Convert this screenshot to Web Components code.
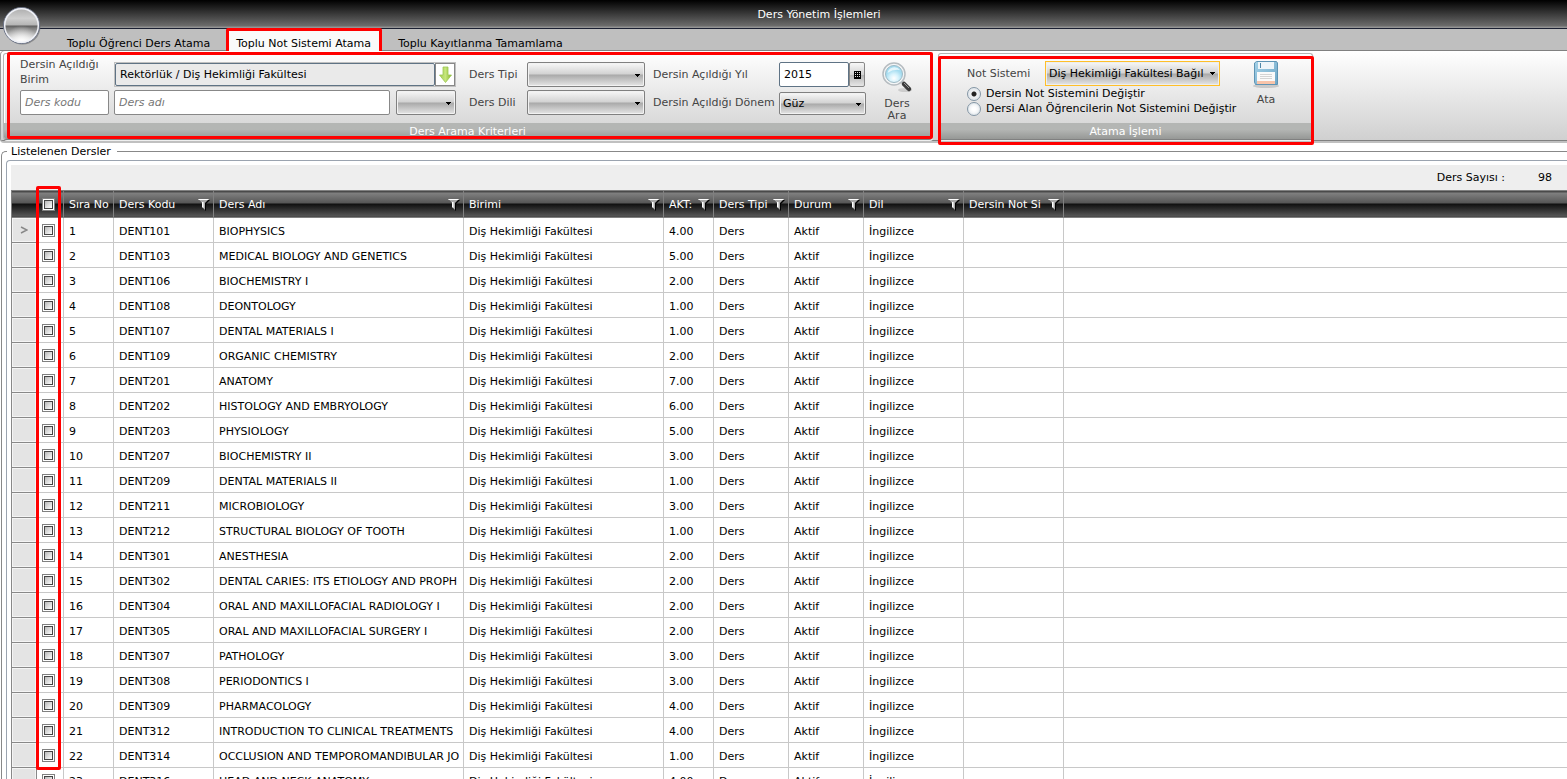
<!DOCTYPE html>
<html lang="tr">
<head>
<meta charset="utf-8">
<title>Ders Yönetim İşlemleri</title>
<style>
  html, body { margin: 0; height: 100%; }
  body { background: #fff; overflow: hidden; color: #000; font: 11px/15px "DejaVu Sans", Verdana, sans-serif; }
</style>
</head>
<body>
<course-app></course-app>
<script>
const RESET = `
  *, *::before, *::after { box-sizing: border-box; }
  button, input, select { font: inherit; color: inherit; margin: 0; }
  :host([hidden]) { display: none; }
`;

class BaseElement extends HTMLElement {
  connectedCallback() {
    if (this.shadowRoot) return;
    const root = this.attachShadow({ mode: 'open' });
    root.innerHTML = `<style>${RESET}${this.css()}</style>${this.html()}`;
  }
  css() { return ''; }
  html() { return ''; }
}

customElements.define('title-bar', class extends BaseElement {
  css() { return `
    :host { display: block; height: 29px; border-bottom: 1px solid #1b2032; color: #fff;
      background: linear-gradient(#000, #6c6c6c 26px, #8f8f8f 27px, #999); }
    h1 { margin: 0; font: inherit; line-height: 29px; text-align: center; padding-left: 71px; }
  `; }
  html() { return `<h1><slot></slot></h1>`; }
});

customElements.define('app-orb', class extends BaseElement {
  css() { return `
    :host { position: absolute; left: 3px; top: 6px; width: 38px; height: 40px; z-index: 2; }
    button { border: 0; padding: 0; background: none; display: block; }
    svg { display: block; }
  `; }
  html() { return `<button aria-label="Menü"><svg width="38" height="40" viewBox="0 0 38 40">
    <defs>
      <linearGradient id="o" x1="0" y1="0" x2="0" y2="1">
        <stop offset="0" stop-color="#aaa"/><stop offset=".3" stop-color="#cfcfcf"/><stop offset=".49" stop-color="#b4b4b4"/>
        <stop offset=".51" stop-color="#5e5e5e"/><stop offset=".58" stop-color="#808080"/><stop offset=".85" stop-color="#d8d8d8"/><stop offset="1" stop-color="#fff"/>
      </linearGradient>
      <radialGradient id="w" cx=".5" cy="1" r=".5"><stop offset="0" stop-color="#fff"/><stop offset="1" stop-color="#fff" stop-opacity="0"/></radialGradient>
    </defs>
    <circle cx="19.500" cy="20.500" r="18" fill="#666" opacity=".6"/>
    <circle cx="18.500" cy="19.500" r="18" fill="url(#o)" stroke="#6b7388" stroke-width="1"/>
    <circle cx="18.500" cy="19.500" r="16.800" fill="url(#w)" stroke="#eef0f6" stroke-width="1.500"/>
  </svg></button>`; }
});

customElements.define('ribbon-tabs', class extends BaseElement {
  css() { return `
    :host { display: block; height: 22px; background: #bfbfbf; border-bottom: 1px solid #808080; padding-left: 57px; }
    nav { display: flex; }
  `; }
  html() { return `<nav><slot></slot></nav>`; }
});

customElements.define('ribbon-tab', class extends BaseElement {
  css() { return `
    :host { display: block; position: relative; }
    a { display: block; height: 21px; line-height: 29px; padding: 0 9px 0 10px; color: #000; text-decoration: none; white-space: nowrap; }
    :host([selected]) { width: 154px; margin: 0 2px 0 8px; }
    :host([selected]) a { background: #fafafa; height: 22px; padding: 0 9px; }
    :host([selected])::after { content: ""; position: absolute; inset: -1px -1px -3px -1px; border: 3px solid #f00; border-radius: 2px; pointer-events: none; }
    :host(:last-child) a { padding-left: 15px; }
  `; }
  html() { return `<a href="#"><slot></slot></a>`; }
});

customElements.define('ribbon-group', class extends BaseElement {
  css() { return `
    :host { display: flex; flex-direction: column; position: relative; height: 87px; border: 1px solid #b4b4b4;
      border-bottom-color: #808080; border-radius: 3px; box-shadow: inset 1px 1px #fff, 1px 1px #eee; }
    .body { flex: 1; }
    .caption { height: 16px; line-height: 18px; text-align: center; color: #fff; background: linear-gradient(#b4b6b4 40%, #969896); border-radius: 0 0 2px 2px; }
    .mark { position: absolute; inset: var(--mark-inset, 0); border: 3px solid #f00; border-radius: 2px; pointer-events: none; }
  `; }
  html() { return `<div class="body"><slot></slot></div><div class="caption">${this.getAttribute('caption')}</div><div class="mark"></div>`; }
});

customElements.define('drop-down', class extends BaseElement {
  css() { return `
    :host { display: block; position: relative; height: 25px; }
    select { appearance: none; display: block; width: 100%; height: 100%; padding: 0 16px 0 3px; border: 1px solid #808080; border-radius: 2px;
      background: linear-gradient(#f8f8f8, #d2d2d2 48%, #a9a9a9 52%, #e6e6e6); box-shadow: inset 0 0 0 1px #f2f2f2; }
    :host([active]) select { border-color: #ffbf28; border-radius: 0; padding: 0 0 0 3px; box-shadow: inset 0 0 0 1px #eee; }
    svg { position: absolute; right: 5px; top: 50%; margin-top: -1px; pointer-events: none; }
  `; }
  html() { return `<select aria-label="${this.getAttribute('label')}"><option>${this.getAttribute('value') || ''}</option></select>
    <svg width="5" height="3" viewBox="0 0 5 3" shape-rendering="crispEdges"><path d="M0 0H5V1H4V2H3V3H2V2H1V1H0Z" fill="#000"/></svg>`; }
});

customElements.define('tool-button', class extends BaseElement {
  css() { return `
    :host { display: block; }
    button { display: flex; flex-direction: column; align-items: center; border: 0; padding: 0; background: none; line-height: 12px; color: #444; width: 100%; }
    ::slotted(svg) { display: block; }
  `; }
  html() { return `<button><slot></slot></button>`; }
});

customElements.define('search-criteria', class extends BaseElement {
  css() { return `
    :host { display: grid; grid-template-columns: 94px 355px 58px 126px 126px 87px 62px; grid-template-rows: 25px 25px; row-gap: 3px; padding: 8px 0 0 16px; color: #444; }
    .label { align-self: center; }
    .unit { width: 80px; align-self: end; height: 30px; }
    input { height: 25px; border: 1px solid #888; border-radius: 2px; padding: 0 4px; background: #fff; width: 100%; color: #000; outline: 0; }
    input::placeholder { color: #777; font-style: italic; opacity: 1; }
    .pick { display: flex; width: 342px; border: 1px solid #c0c0c0; }
    .pick input { height: 23px; background: #eaeaea; border-color: #5f7385; }
    .pick button { flex: none; width: 20px; padding: 0; border: 1px solid #888; background: #fff; display: grid; place-items: center; }
    .code { width: 89px; }
    .name { display: flex; gap: 6px; width: 342px; }
    .name input { flex: 1; }
    .name drop-down { width: 60px; }
    .wide { width: 118px; }
    .year { display: flex; }
    .year input { width: 70px; border-color: #5f7385; }
    .year button { width: 16px; padding: 0; border: 1px solid #888; border-radius: 2px; background: linear-gradient(#f8f8f8, #d2d2d2 50%, #b4b4b4 52%, #e6e6e6); display: grid; place-items: center; }
    .term { height: 23px; align-self: end; color: #000; }
    tool-button { grid-column: 7; grid-row: 1 / 3; }
    tool-button span { margin-top: 4px; }
    .code { grid-column: 1; }
  `; }
  html() { return `
    <label class="unit" for="unit">Dersin Açıldığı Birim</label>
    <div class="pick"><input id="unit" value="Rektörlük / Diş Hekimliği Fakültesi" readonly><button aria-label="Birim seç">
      <svg width="13" height="18" viewBox="0 0 13 18"><defs><linearGradient id="g" x1="0" x2="1"><stop offset="0" stop-color="#a4cf52"/><stop offset=".5" stop-color="#c6e67c"/><stop offset="1" stop-color="#85b52c"/></linearGradient></defs>
      <path d="M4 1H9V9H12.500L6.500 16.500L.5 9H4Z" fill="url(#g)" stroke="#9cc653" stroke-width=".8"/></svg></button></div>
    <span class="label">Ders Tipi</span><drop-down class="wide" label="Ders Tipi"></drop-down>
    <label class="label" for="year">Dersin Açıldığı Yıl</label>
    <div class="year"><input id="year" value="2015"><button aria-label="Yıl seç"><svg width="7" height="8" viewBox="0 0 7 8"><path d="M0 0H7V8H0Z" fill="#000"/><path d="M1 1h1v1H1zM3 1h1v1H3zM5 1h1v1H5zM1 3h1v1H1zM3 3h1v1H3zM5 3h1v1H5zM1 5h1v1H1zM3 5h1v1H3zM5 5h1v1H5z" fill="#ddd"/></svg></button></div>
    <tool-button>
      <svg width="32" height="32" viewBox="0 0 32 32"><defs><radialGradient id="m" cx=".5" cy=".75"><stop offset="0" stop-color="#fff"/><stop offset=".5" stop-color="#d8f3fc"/><stop offset="1" stop-color="#a4dcf0"/></radialGradient></defs>
        <ellipse cx="24" cy="28" rx="7" ry="2" fill="#888" opacity=".3"/>
        <path d="M20 19L23 22" stroke="#aaa" stroke-width="2.500"/>
        <path d="M23 22L28 27" stroke="#3c3c3c" stroke-width="4.500" stroke-linecap="round"/><path d="M23 21L28 26" stroke="#999" stroke-width="1"/>
        <circle cx="13" cy="12" r="11" fill="#f4f6f7" stroke="#b6bcc0" stroke-width="1.500"/><circle cx="13" cy="12" r="8.500" fill="url(#m)" stroke="#9fb9c4" stroke-width="1"/>
        <path d="M6.500 11A7 7 0 0 1 19 8Q12 7 6.500 11" fill="#fff" opacity=".7"/></svg>
      <span>Ders<br>Ara</span></tool-button>
    <input class="code" placeholder="Ders kodu" aria-label="Ders kodu">
    <div class="name"><input placeholder="Ders adı" aria-label="Ders adı"><drop-down label="Seçim"></drop-down></div>
    <span class="label">Ders Dili</span><drop-down class="wide" label="Ders Dili"></drop-down>
    <span class="label">Dersin Açıldığı Dönem</span><drop-down class="term" label="Dönem" value="Güz"></drop-down>`; }
});

customElements.define('assign-panel', class extends BaseElement {
  css() { return `
    :host { display: flex; padding: 6px 0 0 28px; color: #444; }
    .left { width: 284px; }
    .row { display: flex; align-items: center; height: 26px; }
    .row span { width: 78px; }
    drop-down { width: 175px; color: #000; }
    label { display: flex; align-items: center; gap: 5px; height: 15px; color: #000; white-space: nowrap; }
    input { appearance: none; flex: none; width: 14px; height: 14px; border-radius: 50%; border: 1px solid #8496a5; background: radial-gradient(#fff 20%, #dfe5ea); box-shadow: inset 0 0 0 1px #e4e9ed; }
    input:checked { background: radial-gradient(circle, #222 0 2px, #eef1f4 3px, #d5dce2); }
    tool-button { width: 30px; }
    tool-button span { margin-top: 6px; }
  `; }
  html() { return `
    <div class="left"><div class="row"><span>Not Sistemi</span><drop-down active label="Not Sistemi" value="Diş Hekimliği Fakültesi Bağıl"></drop-down></div>
    <label><input type="radio" name="m" checked>Dersin Not Sistemini Değiştir</label>
    <label><input type="radio" name="m">Dersi Alan Öğrencilerin Not Sistemini Değiştir</label></div>
    <tool-button><svg width="28" height="28" viewBox="0 0 28 28"><defs><linearGradient id="d" x1="0" y1="0" x2="1" y2="1"><stop offset="0" stop-color="#a5d2e8"/><stop offset="1" stop-color="#6ea6c6"/></linearGradient></defs>
      <ellipse cx="14" cy="26" rx="13" ry="2" fill="#888" opacity=".35"/>
      <path d="M4.500 1.500H24.500L25.500 3V24.500H3.500L2.500 22V3Z" fill="url(#d)" stroke="#5e94b4"/>
      <path d="M6 2H22V9H6Z" fill="#eef5f9"/><path d="M8 3H9V8H8Z" fill="#4f87a8"/>
      <path d="M5 12H23V24H5Z" fill="#fafafa"/><path d="M5 21H23V24H5Z" fill="#f8c4aa"/><path d="M8 14.500H20M8 16.500H20M8 18.500H20" stroke="#d4d4d4"/></svg>
      <span>Ata</span></tool-button>`; }
});

const COURSES = [
  ['DENT101', 'BIOPHYSICS', 4], ['DENT103', 'MEDICAL BIOLOGY AND GENETICS', 5], ['DENT106', 'BIOCHEMISTRY I', 2],
  ['DENT108', 'DEONTOLOGY', 1], ['DENT107', 'DENTAL MATERIALS I', 1], ['DENT109', 'ORGANIC CHEMISTRY', 2],
  ['DENT201', 'ANATOMY', 7], ['DENT202', 'HISTOLOGY AND EMBRYOLOGY', 6], ['DENT203', 'PHYSIOLOGY', 5],
  ['DENT207', 'BIOCHEMISTRY II', 3], ['DENT209', 'DENTAL MATERIALS II', 1], ['DENT211', 'MICROBIOLOGY', 3],
  ['DENT212', 'STRUCTURAL BIOLOGY OF TOOTH', 1], ['DENT301', 'ANESTHESIA', 2],
  ['DENT302', 'DENTAL CARIES: ITS ETIOLOGY AND PROPH', 2], ['DENT304', 'ORAL AND MAXILLOFACIAL RADIOLOGY I', 2],
  ['DENT305', 'ORAL AND MAXILLOFACIAL SURGERY I', 2], ['DENT307', 'PATHOLOGY', 3], ['DENT308', 'PERIODONTICS I', 3],
  ['DENT309', 'PHARMACOLOGY', 4], ['DENT312', 'INTRODUCTION TO CLINICAL TREATMENTS', 4],
  ['DENT314', 'OCCLUSION AND TEMPOROMANDIBULAR JO', 1], ['DENT316', 'HEAD AND NECK ANATOMY', 4]
];

customElements.define('course-grid', class extends BaseElement {
  css() { return `
    :host { display: block; position: relative; }
    table { table-layout: fixed; width: 100%; border-collapse: separate; border-spacing: 0; }
    th { height: 28px; padding: 0; border: 1px solid #808080; border-left-width: 0; color: #fff; font-weight: normal; text-align: left;
      background: linear-gradient(#4a4a4a 1px, #808080 2px, #565656 12px, #101010 13px, #555 25px, #444); }
    th:first-child { border-left-width: 1px; }
    th:last-child, td:last-child { border-right: 0; }
    .head { display: flex; align-items: center; height: 26px; padding: 1px 3px 0 5px; gap: 2px; }
    .head span { flex: 1; overflow: hidden; white-space: nowrap; }
    .head button { flex: none; border: 0; padding: 0; background: none; width: 12px; height: 14px; }
    .head svg { display: block; }
    .tight { padding-right: 0; }
    td { height: 25px; padding: 2px 1px 0 5px; border: 0 solid #c8c8c8; border-width: 0 1px 1px 0; white-space: nowrap; overflow: hidden; }
    td:first-child { border: 1px solid #888; border-top: 0; background: #e4e4e4; box-shadow: inset 0 0 0 1px #f4f4f4; padding: 0; text-align: center; }
    th.pick, td.pick { padding: 0 0 0 5px; }
    td:first-child svg { display: block; margin: 0 auto; }
    input { appearance: none; display: block; width: 13px; height: 13px; padding: 2px; border: 1px solid #808080;
      background: linear-gradient(135deg, #b8b8b8, #fff) content-box #fff; box-shadow: inset 0 0 0 1px #fff, inset 0 0 0 2px #444; }
    .mark { position: absolute; left: 25px; top: -4px; width: 25px; height: 584px; border: 3px solid #f00; border-radius: 2px; pointer-events: none; }
  `; }
  html() {
    const funnel = `<button aria-label="Filtre"><svg width="12" height="12" viewBox="0 0 12 12"><path d="M1 1H12L8 5V12L5 9V5Z" fill="#000"/><path d="M0 0H11L7 4V11L4 8V4Z" fill="#a8a8a8"/><path d="M0 0H11L10 1H1ZM4 3H5.500V9L4 8Z" fill="#fff"/></svg></button>`;
    const cols = [['Sıra No', 0], ['Ders Kodu', 1], ['Ders Adı', 1], ['Birimi', 1], ['AKT:', 1], ['Ders Tipi', 1], ['Durum', 1], ['Dil', 1], ['Dersin Not Si', 1]];
    return `<table>
      <colgroup>${[26, 27, 50, 100, 250, 200, 50, 75, 75, 100, 100].map(w => `<col style="width:${w}px">`).join('')}<col></colgroup>
      <thead><tr><th></th><th class="pick"><input type="checkbox" aria-label="Tümünü seç"></th>
      ${cols.map(([t, f]) => `<th><div class="head${f ? '' : ' tight'}"><span>${t}</span>${f ? funnel : ''}</div></th>`).join('')}<th></th></tr></thead>
      <tbody>${COURSES.map(([code, name, akts], i) => `<tr>
        <td>${i ? '' : '<svg width="8" height="8" viewBox="0 0 8 8"><path d="M1 1L7 4L1 7" fill="none" stroke="#888" stroke-width="1.500"/></svg>'}</td>
        <td class="pick"><input type="checkbox" aria-label="${code}"></td><td>${i + 1}</td><td>${code}</td><td>${name}</td>
        <td>Diş Hekimliği Fakültesi</td><td>${akts}.00</td><td>Ders</td><td>Aktif</td><td>İngilizce</td><td></td><td></td></tr>`).join('')}
      </tbody></table><div class="mark"></div>`;
  }
});

customElements.define('course-list', class extends BaseElement {
  css() { return `
    :host { display: block; flex: 1; min-height: 0; overflow: hidden; padding: 1px 0 0 1px; }
    fieldset { margin: 0; min-width: 0; padding: 0 0 0 4px; border: 1px solid #888; border-right: 0; border-radius: 5px 0 0 0; }
    legend { margin-left: 1px; padding: 0 6px 0 4px; line-height: 15px; }
    .panel { border: 1px solid #9ba4b0; border-right: 0; border-radius: 4px 0 0 0; padding: 4px 0 0 4px; margin-top: 1px; }
    .count { display: flex; justify-content: flex-end; gap: 33px; height: 25px; line-height: 25px; background: #eee; padding-right: 15px; }
  `; }
  html() { return `<fieldset><legend>Listelenen Dersler</legend><div class="panel">
    <div class="count"><span>Ders Sayısı :</span><span>98</span></div><course-grid></course-grid></div></fieldset>`; }
});

customElements.define('course-app', class extends BaseElement {
  css() { return `
    :host { display: flex; flex-direction: column; height: 100vh; position: relative; }
    .ribbon { flex: none; position: relative; display: flex; gap: 6px; height: 92px; padding: 2px 3px; border-bottom: 2px solid #c0c0c0;
      border-radius: 4px 0 0 4px; background: linear-gradient(#fff, #d0d0d0 89px, #808080 89px); box-shadow: inset 1px 0 #999; }
    .search { flex: 0 0 929px; --mark-inset: -2px -2px 0 3px; }
    .assign { flex: 0 0 375px; --mark-inset: 2px -2px -6px -1px; }
  `; }
  html() { return `
    <title-bar>Ders Yönetim İşlemleri</title-bar>
    <app-orb></app-orb>
    <ribbon-tabs><ribbon-tab>Toplu Öğrenci Ders Atama</ribbon-tab><ribbon-tab selected>Toplu Not Sistemi Atama</ribbon-tab><ribbon-tab>Toplu Kayıtlanma Tamamlama</ribbon-tab></ribbon-tabs>
    <div class="ribbon">
      <ribbon-group class="search" caption="Ders Arama Kriterleri"><search-criteria></search-criteria></ribbon-group>
      <ribbon-group class="assign" caption="Atama İşlemi"><assign-panel></assign-panel></ribbon-group>
    </div>
    <course-list></course-list>`; }
});
</script>
</body>
</html>
